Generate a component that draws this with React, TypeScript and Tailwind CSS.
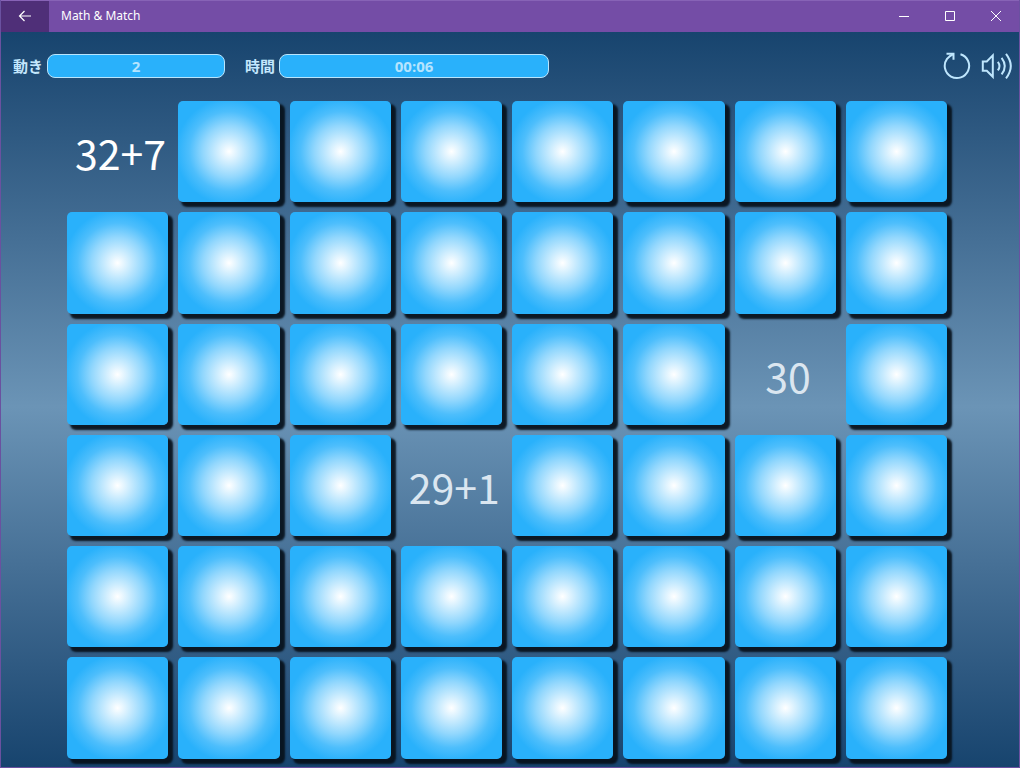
import React from "react";
import clsx from "clsx";

const COLUMNS = 8;
const ROWS = 6;

type OpenCard = { text: string; faded: boolean };

// Face-up cards, keyed by their index on the board
const openCards: Record<number, OpenCard> = {
  0: { text: "32+7", faded: false },
  22: { text: "30", faded: true },
  27: { text: "29+1", faded: true },
};

function TitleBar() {
  return (
    <header className="flex h-8 shrink-0 border-t border-[#8763b6] bg-[#744da6] pb-px text-white">
      <button
        aria-label="Back"
        className="-mb-px flex w-12 items-center justify-center bg-[#4f2f78] pb-px"
      >
        <svg width="14" height="12" viewBox="0 0 14 12" fill="none" stroke="currentColor" strokeWidth="1.2">
          <path d="M13 6H1.5M6.5 1l-5 5 5 5" />
        </svg>
      </button>
      <h1 className="flex flex-1 items-center pl-3 font-['Noto_Sans','Open_Sans',sans-serif] text-[12px]">
        Math &amp; Match
      </h1>
      <button aria-label="Minimize" className="flex w-[46px] items-center justify-center">
        <svg width="10" height="10" viewBox="0 0 10 10" stroke="currentColor">
          <path d="M0 5.5h10" />
        </svg>
      </button>
      <button aria-label="Maximize" className="flex w-[46px] items-center justify-center">
        <svg width="10" height="10" viewBox="0 0 10 10" fill="none" stroke="currentColor">
          <path d="M.5.5h9v9h-9z" />
        </svg>
      </button>
      <button aria-label="Close" className="flex w-[46px] items-center justify-center">
        <svg width="10" height="10" viewBox="0 0 10 10" fill="none" stroke="currentColor">
          <path d="M0 0l10 10M10 0L0 10" />
        </svg>
      </button>
    </header>
  );
}

type StatProps = { id: string; label: string; value: string; wide?: boolean };

function Stat({ id, label, value, wide }: StatProps) {
  return (
    <div className="flex items-center gap-1">
      <label htmlFor={id} className="text-[15px] leading-6 font-bold text-[#c4e7fd]">
        {label}
      </label>
      <output
        id={id}
        className={clsx(
          "block h-6 rounded-lg border border-[#b9e5fd] bg-[#29b1fb] text-center font-['Open_Sans','Noto_Sans',sans-serif] text-[15px] leading-[22px] font-bold text-[#b5e4fe]",
          wide ? "w-[270px]" : "w-[178px]"
        )}
      >
        {value}
      </output>
    </div>
  );
}

function Toolbar() {
  return (
    <div className="flex h-[69px] shrink-0 items-center gap-5 pr-1.5 pb-0.5 pl-3">
      <Stat id="moves" label="動き" value="2" />
      <Stat id="time" label="時間" value="00:06" wide />
      <div className="ml-auto flex items-center gap-2.5 text-[#bfe6fd]">
        <button aria-label="Restart">
          <svg width="28" height="28" viewBox="0 0 28 28" fill="none" stroke="currentColor" strokeWidth="2">
            <path d="M17.5 2.2A12.2 12.2 0 1 1 4 6.8Q6.5 3.8 10.5 2" />
            <path d="M3.5 1.8h7v6" />
          </svg>
        </button>
        <button aria-label="Sound">
          <svg width="32" height="28" viewBox="0 0 32 28" fill="none" stroke="currentColor" strokeWidth="2">
            <path d="M1.8 9.4h4l6-6v21.4l-6-6h-4z" />
            <path d="M16.8 9.8q3.4 4.3 0 8.6" />
            <path d="M20.6 5.8q6.4 8.3 0 16.6" />
            <path d="M25 1.8q9.6 12.3 0 24.6" />
          </svg>
        </button>
      </div>
    </div>
  );
}

function Card({ card }: { card?: OpenCard }) {
  if (card) {
    return (
      <button
        className={clsx(
          "flex aspect-square items-center justify-center pb-1 text-[41px] leading-none",
          card.faded ? "text-[#dbe6f0]" : "text-white"
        )}
      >
        {card.text}
      </button>
    );
  }

  // Room on the right and below is for the tile's shadow
  return (
    <div className="flex aspect-square pr-1.5 pb-1.5">
      <button
        aria-label="Hidden card"
        className="flex-1 rounded-[5px] bg-[radial-gradient(circle_at_center,#ffffff_0px,#92d7fd_26px,#4dbefc_40px,#29b1fb_53px)] shadow-[4px_4px_2px_1px_#07121df0]"
      />
    </div>
  );
}

function App() {
  const cells = Array.from({ length: COLUMNS * ROWS }, (_, i) => i);

  return (
    <div className="flex min-h-screen flex-col border-x border-b border-[#6a51a0] bg-[#17446e] font-['Noto_Sans_CJK_JP',sans-serif]">
      <TitleBar />
      <main className="flex flex-1 flex-col bg-linear-to-b from-[#17446e] via-[#6b94b6] via-51% to-[#17446e]">
        <Toolbar />
        <div className="grid grid-cols-8 gap-1 px-[66px]">
          {cells.map((i) => (
            <Card key={i} card={openCards[i]} />
          ))}
        </div>
      </main>
    </div>
  );
}

export default App;
